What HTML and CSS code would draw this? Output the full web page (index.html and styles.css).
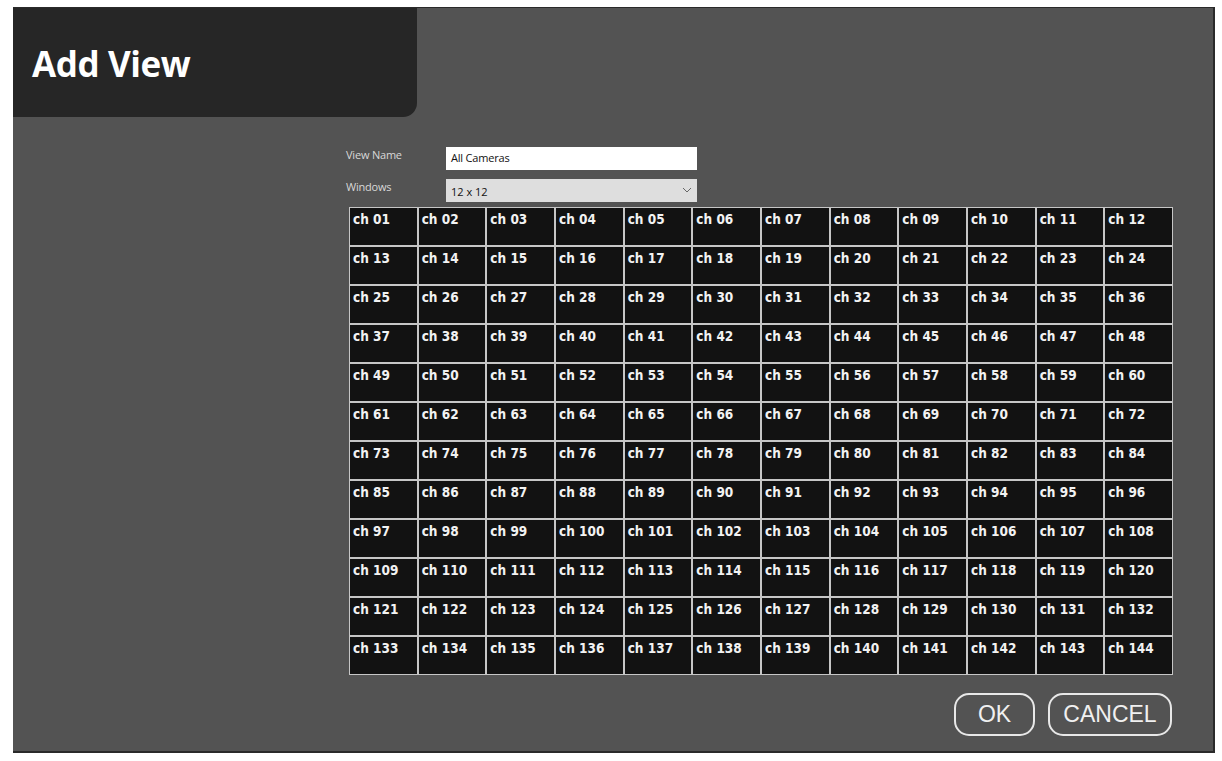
FILE: index.html
```html
<!DOCTYPE html>
<html>
<head>
<meta charset="utf-8">
<link rel="stylesheet" href="styles.css">
</head>
<body>
<div class="panel">
  <div class="header"><h1 class="title">Add View</h1></div>
  <div class="content">
    <div class="form">
      <div class="row">
        <label class="label">View Name</label>
        <div class="input">All Cameras</div>
      </div>
      <div class="row">
        <label class="label">Windows</label>
        <div class="select"><span>12 x 12</span>
          <svg class="chev" width="10" height="6" viewBox="0 0 10 6"><path d="M1 1 L5 5 L9 1" fill="none" stroke="#666" stroke-width="1"/></svg>
        </div>
      </div>
    </div>
    <div class="grid" id="grid"></div>
    <div class="buttons">
      <button class="btn ok">OK</button>
      <button class="btn cancel">CANCEL</button>
    </div>
  </div>
</div>
<script src="script.js"></script>
</body>
</html>
```
FILE: script.js
```js
var g = document.getElementById('grid');
for (var i = 1; i <= 144; i++) {
  var d = document.createElement('div');
  d.className = 'cell';
  d.textContent = 'ch ' + (i < 10 ? '0' + i : i);
  g.appendChild(d);
}
```
FILE: styles.css
```css
html, body { margin: 0; padding: 0; background: #ffffff; }
body { font-family: "Open Sans", "Liberation Sans", sans-serif; }
.panel {
  margin: 7px 0 0 13px;
  width: 1200px;
  height: 743px;
  background: #535353;
  border-top: 1px solid #2a2a2a;
  border-right: 2px solid #2a2a2a;
  border-bottom: 2px solid #2a2a2a;
  display: flex;
  flex-direction: column;
  box-sizing: content-box;
}
.header {
  flex-shrink: 0;
  width: 404px;
  height: 109px;
  background: #262626;
  border-bottom-right-radius: 14px;
  box-sizing: border-box;
  padding: 34px 0 0 19px;
}
.title {
  margin: 0;
  color: #ffffff;
  font-family: "Open Sans", sans-serif;
  font-weight: 700;
  font-size: 35px;
  line-height: 44px;
  letter-spacing: -0.4px;
}
.content {
  margin: 30px 0 0 333px;
  display: flex;
  flex-direction: column;
}
.form { display: flex; flex-direction: column; gap: 9px; }
.row { display: flex; align-items: flex-start; }
.label {
  width: 100px;
  color: #d8d8d8;
  font-size: 11px;
  font-family: "Open Sans", sans-serif;
  line-height: 14px;
  margin-top: 1px;
  letter-spacing: -0.2px;
}
.input {
  width: 251px;
  height: 23px;
  background: #ffffff;
  box-sizing: border-box;
  padding: 3px 0 0 5px;
  font-size: 11px;
  color: #111;
  letter-spacing: -0.2px;
}
.select {
  width: 251px;
  height: 23px;
  background: #dedede;
  box-sizing: border-box;
  padding: 5px 0 0 5px;
  font-size: 11px;
  color: #111;
  display: flex;
  justify-content: space-between;
}
.chev { margin: 3px 5px 0 0; }
.grid {
  margin: 5px 0 0 3px;
  width: 824px;
  display: grid;
  grid-template-columns: repeat(12, 1fr);
  grid-auto-rows: 37px;
  background: #c6c6c6;
  gap: 2px;
  padding: 1px;
  box-sizing: border-box;
}
.cell {
  background: #121212;
  color: #f2f2f2;
  font-family: "DejaVu Sans Condensed", "DejaVu Sans", sans-serif;
  font-weight: 700;
  font-size: 13.5px;
  letter-spacing: 0;
  padding: 4px 0 0 3px;
  line-height: 15px;
}
.buttons {
  margin: 18px 0 0 0;
  width: 826px;
  display: flex;
  justify-content: flex-end;
  gap: 13px;
}
.btn {
  height: 43px;
  background: transparent;
  border: 2px solid #e8e8e8;
  border-radius: 15px;
  color: #f0f0f0;
  font-family: "Liberation Sans", Arial, sans-serif;
  font-size: 23px;
  padding: 0;
}
.ok { width: 81px; }
.cancel { width: 124px; }
```
